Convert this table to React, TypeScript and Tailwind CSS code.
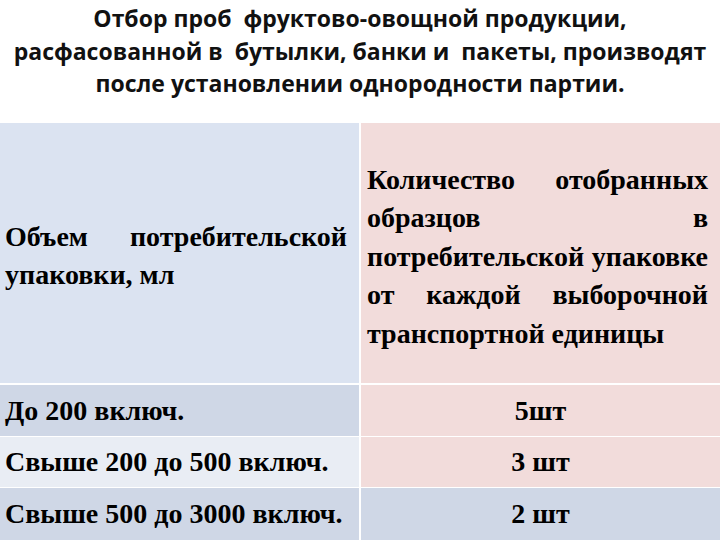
const serif = { fontFamily: '"Liberation Serif", "Times New Roman", "DejaVu Serif", serif' }

function JLine({ words }: { words: string[] }) {
  return (
    <div className="flex justify-between whitespace-nowrap">
      {words.map((w, i) => (
        <span key={i}>{w}</span>
      ))}
    </div>
  )
}

export default function App() {
  const rows = [
    { vol: "До 200 включ.", qty: "5шт", left: "bg-[#cfd7e6]", right: "bg-[#f2dcdb]", h: "h-[51px]" },
    { vol: "Свыше 200 до 500 включ.", qty: "3 шт", left: "bg-[#e9edf4]", right: "bg-[#f2dcdb]", h: "h-[50px]" },
    { vol: "Свыше 500 до 3000 включ.", qty: "2 шт", left: "bg-[#cfd7e6]", right: "bg-[#cfd7e6]", h: "h-[52px]" },
  ]

  return (
    <div className="w-[720px] h-[540px] bg-white overflow-hidden">
      {/* Title */}
      <div
        className="h-[123px] pt-[2px] text-center font-bold text-[23px] leading-[32.5px] text-[#111]"
        style={{ fontFamily: '"Open Sans", "Noto Sans", sans-serif' }}
      >
        <p>Отбор проб&nbsp; фруктово-овощной продукции,</p>
        <p>расфасованной в&nbsp; бутылки, банки и&nbsp; пакеты, производят</p>
        <p>после установлении однородности партии.</p>
      </div>

      {/* Table */}
      <div className="grid grid-cols-[359px_1fr] gap-x-[2px] bg-white text-black font-bold text-[28px]" style={serif}>
        <div className="h-[260px] bg-[#dbe3f1] flex flex-col justify-center pl-[5px] pr-[12px] pt-[6px] leading-[38.5px]">
          <JLine words={["Объем", "потребительской"]} />
          <div>упаковки, мл</div>
        </div>
        <div className="h-[260px] bg-[#f2dcdb] flex flex-col justify-center pl-[6px] pr-[12px] pt-[8px] leading-[38.5px]">
          <JLine words={["Количество", "отобранных"]} />
          <JLine words={["образцов", "в"]} />
          <JLine words={["потребительской", "упаковке"]} />
          <JLine words={["от", "каждой", "выборочной"]} />
          <div>транспортной единицы</div>
        </div>

        <div className="col-span-2 h-[2px]" />

        {rows.map((r, i) => (
          <div key={i} className="contents">
            <div className={`${r.left} ${r.h} flex items-center pl-[5px] ${i > 0 ? "mt-[1px]" : ""}`}>
              {r.vol}
            </div>
            <div className={`${r.right} ${r.h} flex items-center justify-center ${i > 0 ? "mt-[1px]" : ""}`}>
              {r.qty}
            </div>
          </div>
        ))}
      </div>
    </div>
  )
}
